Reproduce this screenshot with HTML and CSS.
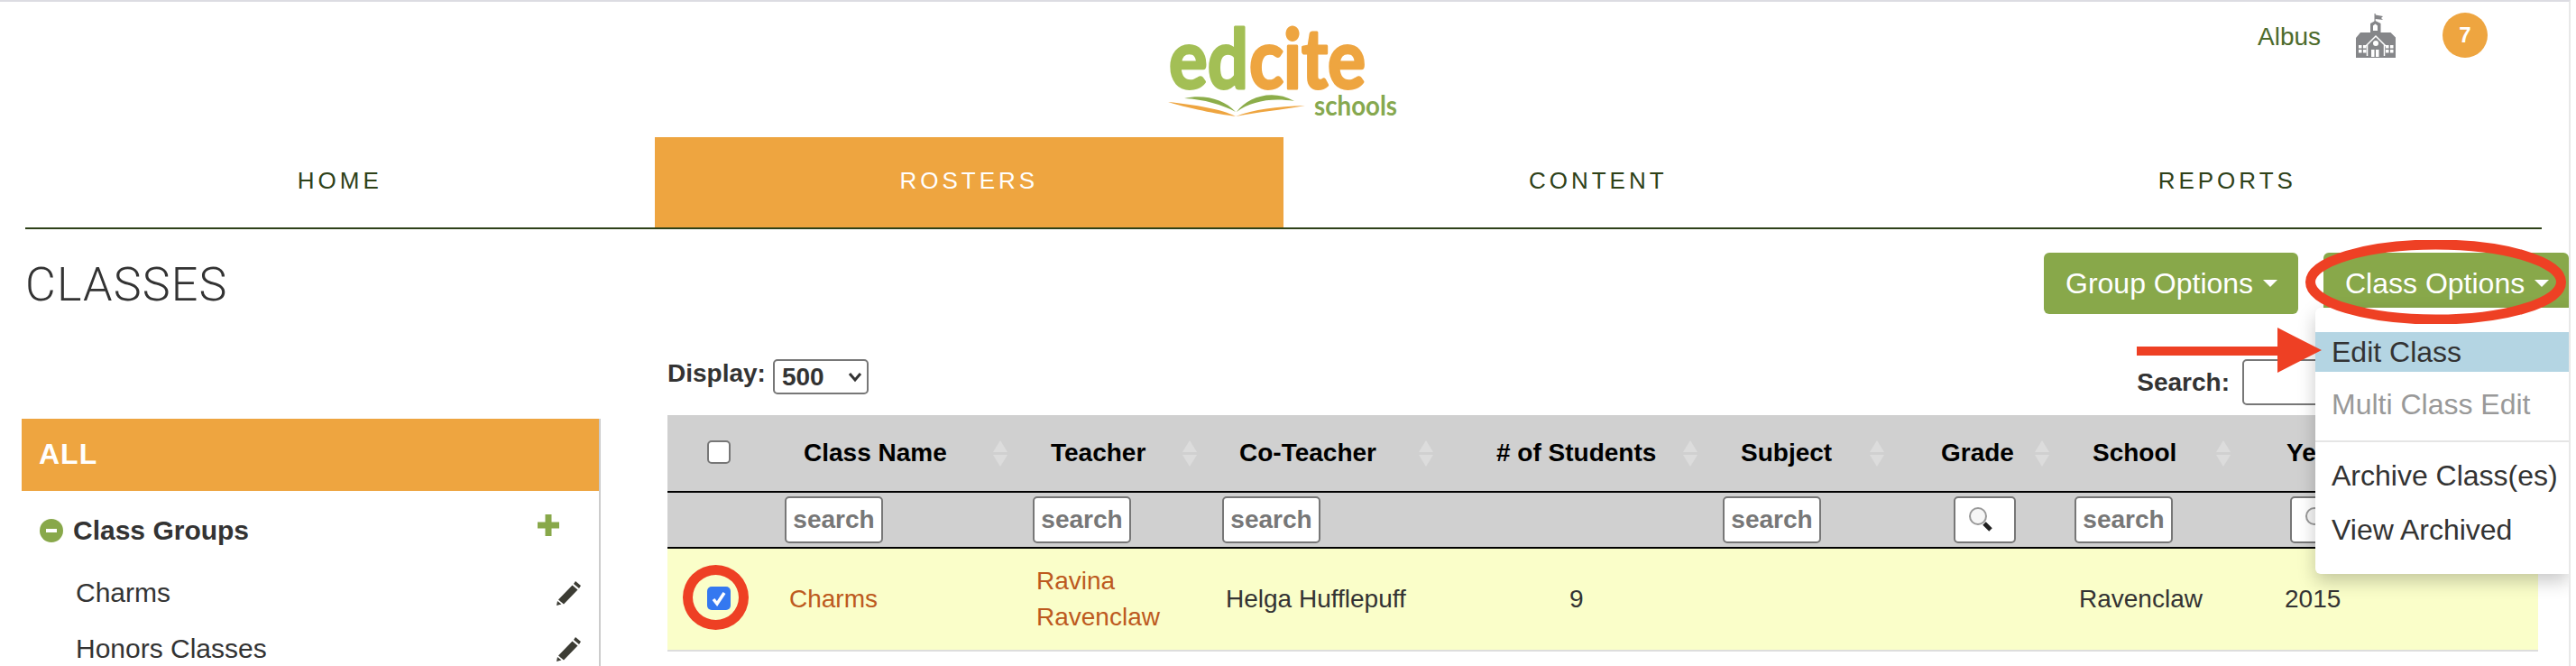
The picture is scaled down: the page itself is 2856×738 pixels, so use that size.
FILE: index.html
```html
<!DOCTYPE html>
<html lang="en">
<head>
<meta charset="utf-8">
<title>Classes</title>
<link rel="stylesheet" href="styles.css">
</head>
<body>
<div class="page">
  <header class="top">
    <svg class="logo" width="256" height="102" viewBox="0 0 256 102">
      <text class="logo-word logo-green" x="1" y="66" textLength="88" lengthAdjust="spacingAndGlyphs">ed</text>
      <text class="logo-word logo-orange" x="90" y="66" textLength="129" lengthAdjust="spacingAndGlyphs">cite</text>
      <text class="logo-schools" x="162" y="96" textLength="92" lengthAdjust="spacingAndGlyphs">schools</text>
      <path class="logo-orange-fill" d="M0 81C30 84 60 89 75 97C60 95 30 90 0 81Z"/>
      <path class="logo-orange-fill" d="M75 97C95 89 120 86 152 85C125 90 100 92 75 97Z"/>
      <path class="logo-green-fill" d="M18 77C40 72 62 78 75 92C60 84 40 78 18 77Z"/>
      <path class="logo-green-fill" d="M76 92C88 76 115 66 140 80C115 76 92 80 76 92Z"/>
    </svg>
    <div class="user">
      <span class="user-name">Albus</span>
      <svg class="school-icon" width="44" height="49" viewBox="0 0 44 49">
        <path d="M20.500 0h1.200v1.500l8.300 1.500-2 2 2 2-8.300-1v3h-1.200z"/>
        <path d="M16 11l5.500-3 6 3v10h11l6 6v22H0V27l5-6h11z"/>
        <path class="school-line" d="M11 36L22 25l11 11"/>
        <path class="school-line" d="M12.500 47V35M31.500 47V35"/>
        <path class="school-cut" d="M19 19v-5.500l2.500-2 2.500 2V19z"/>
        <circle class="school-cut" cx="22" cy="33" r="3"/>
        <rect class="school-cut" x="17" y="40" width="3.500" height="8"/>
        <rect class="school-cut" x="22" y="40" width="3.500" height="8"/>
        <rect class="school-cut" x="3" y="35" width="3.500" height="3.500"/><rect class="school-cut" x="8" y="35" width="3.500" height="3.500"/>
        <rect class="school-cut" x="3" y="40" width="3.500" height="3.500"/><rect class="school-cut" x="8" y="40" width="3.500" height="3.500"/>
        <rect class="school-cut" x="33" y="35" width="3.500" height="3.500"/><rect class="school-cut" x="38" y="35" width="3.500" height="3.500"/>
        <rect class="school-cut" x="33" y="40" width="3.500" height="3.500"/><rect class="school-cut" x="38" y="40" width="3.500" height="3.500"/>
      </svg>
      <span class="badge">7</span>
    </div>
  </header>

  <nav class="nav">
    <a class="nav-tab">HOME</a>
    <a class="nav-tab nav-active">ROSTERS</a>
    <a class="nav-tab">CONTENT</a>
    <a class="nav-tab">REPORTS</a>
  </nav>

  <div class="title-row">
    <h1 class="title">CLASSES</h1>
    <div class="actions">
      <button class="btn btn-group">Group Options<span class="caret"></span></button>
      <div class="btn-wrap">
        <button class="btn btn-class">Class Options<span class="caret"></span></button>
        <ul class="menu">
          <li class="menu-item menu-hover">Edit Class</li>
          <li class="menu-item menu-disabled">Multi Class Edit</li>
          <li class="menu-divider"></li>
          <li class="menu-item">Archive Class(es)</li>
          <li class="menu-item">View Archived</li>
        </ul>
      </div>
    </div>
  </div>

  <div class="content">
    <aside class="side">
      <div class="side-all">ALL</div>
      <div class="side-group">
        <span class="minus"></span>
        <span class="side-group-name">Class Groups</span>
        <svg class="plus" width="24" height="24" viewBox="0 0 24 24"><path d="M8.500 0h7v8.500H24v7h-8.500V24h-7v-8.500H0v-7h8.500z"/></svg>
      </div>
      <div class="side-item">Charms
        <svg class="pencil" width="27" height="27" viewBox="0 0 27 27"><path d="M21 0l6 5-2 3-6-5zM17.500 4.500l6 5L8 25.500l-6-5zM1 22l4.500 3.500L0 27z"/></svg>
      </div>
      <div class="side-item">Honors Classes
        <svg class="pencil" width="27" height="27" viewBox="0 0 27 27"><path d="M21 0l6 5-2 3-6-5zM17.500 4.500l6 5L8 25.500l-6-5zM1 22l4.500 3.500L0 27z"/></svg>
      </div>
    </aside>

    <section class="main">
      <div class="toolbar">
        <label class="field">Display:
          <span class="select">500
            <svg class="chev" width="16" height="12" viewBox="0 0 16 12"><path d="M2 2l6 7 6-7"/></svg>
          </span>
        </label>
        <label class="field field-search">Search:<span class="search-box"></span></label>
      </div>
      <table class="grid">
        <colgroup>
          <col class="c-check"><col class="c-name"><col class="c-teacher"><col class="c-co"><col class="c-students"><col class="c-subject"><col class="c-grade"><col class="c-school"><col class="c-year">
        </colgroup>
        <thead>
          <tr class="head-row">
            <th class="th-check"><span class="box"></span></th>
            <th>Class Name<span class="sort"></span></th>
            <th>Teacher<span class="sort"></span></th>
            <th>Co-Teacher<span class="sort"></span></th>
            <th># of Students<span class="sort"></span></th>
            <th>Subject<span class="sort"></span></th>
            <th>Grade<span class="sort"></span></th>
            <th>School<span class="sort"></span></th>
            <th>Year</th>
          </tr>
          <tr class="filter-row">
            <td></td>
            <td><span class="filter">search</span></td>
            <td><span class="filter">search</span></td>
            <td><span class="filter">search</span></td>
            <td></td>
            <td><span class="filter">search</span></td>
            <td><span class="filter filter-icon"><svg class="glass" width="30" height="30" viewBox="0 0 30 30"><path class="glass-handle" d="M18 19l7 7"/><circle class="glass-lens" cx="11" cy="11" r="9"/></svg></span></td>
            <td><span class="filter">search</span></td>
            <td><span class="filter filter-icon"><svg class="glass" width="30" height="30" viewBox="0 0 30 30"><path class="glass-handle" d="M18 19l7 7"/><circle class="glass-lens" cx="11" cy="11" r="9"/></svg></span></td>
          </tr>
        </thead>
        <tbody>
          <tr class="body-row">
            <td class="td-check"><span class="box box-on"><svg width="18" height="18" viewBox="0 0 18 18"><path d="M3 10l4 5 8-12"/></svg></span></td>
            <td><a class="link">Charms</a></td>
            <td><a class="link">Ravina<br>Ravenclaw</a></td>
            <td>Helga Hufflepuff</td>
            <td>9</td>
            <td></td>
            <td></td>
            <td>Ravenclaw</td>
            <td>2015</td>
          </tr>
        </tbody>
      </table>
    </section>
  </div>

  <svg class="mark mark-ellipse" width="289" height="93" viewBox="0 0 289 93"><ellipse cx="144.500" cy="46.500" rx="139" ry="41.500"/></svg>
  <svg class="mark mark-arrow" width="205" height="50" viewBox="0 0 205 50"><path d="M0 21h156V0l49 25-49 25V31H0z"/></svg>
  <span class="mark mark-ring"></span>
</div>
</body>
</html>
```

FILE: styles.css
```css
* { box-sizing: border-box; }
html, body { margin: 0; height: 738px; overflow: hidden; background: #fff; }
body { font-family: "Liberation Sans", Arial, sans-serif; color: #333; font-size: 28px; }

.page {
  position: relative;
  width: 2850px;
  height: 738px;
  overflow: hidden;
  border-top: 2px solid #dcdce2;
  border-right: 2px solid #e8e8e8;
}

/* header */
.top { position: relative; height: 150px; }
.logo { position: absolute; left: 1295px; top: 30px; overflow: visible; }
.logo-word { font-family: Lato, sans-serif; font-weight: 700; font-size: 92px; stroke-width: 3px; stroke-linejoin: round; }
.logo-green { fill: #a3bf55; stroke: #a3bf55; }
.logo-orange { fill: #eea540; stroke: #eea540; }
.logo-schools { font-family: Lato, sans-serif; font-weight: 700; font-size: 30px; fill: #86a84f; }
.logo-orange-fill { fill: #eea540; }
.logo-green-fill { fill: #8cad4a; }
.user { position: absolute; left: 2503px; top: 12px; display: flex; align-items: center; }
.user-name { color: #4d6b2c; font-size: 28px; margin-top: 4px; }
.school-icon { margin-left: 39px; fill: #858689; }
.school-line { fill: none; stroke: #fff; stroke-width: 1.500; }
.school-cut { fill: #fff; }
.badge {
  width: 50px; height: 50px; margin-left: 52px; border-radius: 50%;
  background: #eea540; color: #fff; font-weight: 700; font-size: 24px;
  display: flex; align-items: center; justify-content: center;
}

/* nav */
.nav { display: flex; margin: 0 30px 0 28px; border-bottom: 2px solid #2e4118; height: 102px; }
.nav-tab {
  flex: 1; display: flex; align-items: center; justify-content: center;
  padding-bottom: 3px; color: #2e4118; font-size: 26px; letter-spacing: 4px;
}
.nav-active { background: #eea540; color: #fff; }

/* title row */
.title-row { display: flex; justify-content: space-between; padding: 26px 0 0 28px; height: 110px; position: relative; z-index: 2; }
.title { margin: 7px 0 0; font-family: Roboto, sans-serif; font-weight: 300; font-size: 52px; line-height: 58px; color: #333; letter-spacing: 1.2px; }
.actions { display: flex; align-items: flex-start; gap: 28px; }
.btn-wrap { position: relative; }
.btn {
  display: flex; align-items: center; height: 68px; padding: 0 0 0 24px;
  border: 0; border-radius: 6px; background: #88a84a; color: #fff;
  font-family: inherit; font-size: 32px; white-space: nowrap;
}
.btn-group { width: 282px; }
.btn-class { width: 272px; }
.caret { margin-left: 11px; border-top: 8px solid #fff; border-left: 8px solid transparent; border-right: 8px solid transparent; }
.menu {
  position: absolute; top: 61px; left: -9px; right: 0; height: 295px; margin: 0; padding: 27px 0 0;
  list-style: none; background: #fff; border-radius: 6px 0 0 6px;
  box-shadow: 0 8px 20px rgba(0, 0, 0, .22);
}
.menu-item { height: 44px; padding-left: 18px; font-size: 32px; line-height: 44px; color: #333; }
.menu-hover { background: #b4d5e3; }
.menu-disabled { margin-top: 14px; color: #999; }
.menu-divider { height: 2px; margin: 18px 0 15px; background: #e5e5e5; }
.menu-divider + .menu-item + .menu-item { margin-top: 16px; }

/* content */
.content { display: flex; align-items: flex-start; }
.side { width: 642px; height: 274px; margin: 100px 0 0 24px; border-right: 2px solid #ccc; }
.side-all { height: 80px; padding: 0 0 0 19px; background: #eea540; color: #fff; font-size: 32px; font-weight: 700; letter-spacing: 1px; line-height: 78px; }
.side-group { display: flex; align-items: center; height: 30px; margin: 29px 44px 0 20px; }
.minus { position: relative; width: 26px; height: 26px; border-radius: 50%; background: #88a84a; }
.minus::after { content: ""; position: absolute; left: 7px; top: 11px; width: 12px; height: 4px; background: #fff; }
.side-group-name { margin-left: 11px; font-size: 30px; font-weight: 700; }
.plus { margin-left: auto; margin-top: -12px; fill: #88a84a; }
.side-item { display: flex; align-items: center; justify-content: space-between; height: 62px; padding: 0 20px 0 60px; font-size: 30px; }
.side-group + .side-item { margin-top: 23px; }
.pencil { fill: #3c3c34; }

.main { width: 2074px; margin-left: 74px; }
.toolbar { display: flex; justify-content: space-between; height: 96px; padding-top: 34px; }
.field { display: flex; font-weight: 700; color: #333; }
.select {
  display: flex; align-items: center; justify-content: space-between;
  width: 106px; height: 39px; margin-left: 8px; padding: 0 5px 0 8px;
  border: 2px solid #777; border-radius: 5px; background: #fff; font-weight: 700;
}
.chev { fill: none; stroke: #333; stroke-width: 3; }
.field-search { align-items: center; height: 51px; }
.search-box { width: 328px; height: 51px; margin-left: 14px; border: 2px solid #777; border-radius: 5px; background: #fff; }

/* table */
.grid { width: 2074px; table-layout: fixed; border-collapse: separate; border-spacing: 0; }
.c-check { width: 120px; }
.c-name { width: 275px; }
.c-teacher { width: 210px; }
.c-co { width: 262px; }
.c-students { width: 293px; }
.c-subject { width: 207px; }
.c-grade { width: 183px; }
.c-school { width: 201px; }
.c-year { width: 323px; }

.head-row th {
  position: relative; height: 86px; padding: 0; background: #d0d0d0; color: #000;
  font-size: 28px; font-weight: 700; text-align: left; white-space: nowrap;
  border-bottom: 2px solid #000;
}
.head-row th:nth-child(2) { padding-left: 31px; }
.head-row th:nth-child(3) { padding-left: 30px; }
.head-row th:nth-child(4) { padding-left: 29px; }
.head-row th:nth-child(5) { padding-left: 52px; }
.head-row th:nth-child(6) { padding-left: 30px; }
.head-row th:nth-child(7) { padding-left: 45px; }
.head-row th:nth-child(8) { padding-left: 30px; }
.head-row th:nth-child(9) { padding-left: 44px; }
.box {
  display: block; width: 26px; height: 26px; margin: 0 0 3px 44px;
  background: #fff; border: 2px solid #777; border-radius: 5px;
}
.box-on { display: flex; align-items: center; justify-content: center; margin-bottom: 2px; background: #3478f0; border: 0; }
.box-on svg { fill: none; stroke: #fff; stroke-width: 3.500; }
.sort { position: absolute; right: 18px; top: 28px; width: 16px; height: 29px; }
.sort::before, .sort::after { content: ""; position: absolute; left: 0; border-left: 8px solid transparent; border-right: 8px solid transparent; }
.sort::before { top: 0; border-bottom: 13px solid #dcdcdc; }
.sort::after { bottom: 0; border-top: 13px solid #dcdcdc; }

.filter-row td { height: 62px; padding: 0 0 0 10px; background: #d0d0d0; border-bottom: 2px solid #000; vertical-align: middle; }
.filter-row td:nth-child(7) { padding-left: 59px; }
.filter-row td:nth-child(9) { padding-left: 48px; }
.filter {
  display: flex; align-items: center; justify-content: center;
  width: 109px; height: 52px; background: #fff; border: 2px solid #777; border-radius: 5px;
  color: #777; font-size: 28px; font-weight: 700;
}
.filter-icon { width: 69px; }
.glass { margin-left: -7px; }
.glass-handle { fill: none; stroke: #222; stroke-width: 5; }
.glass-lens { fill: #f6f6f6; stroke: #999; stroke-width: 2; }

.body-row td { height: 114px; padding: 0; background: #fafec9; border-bottom: 2px solid #ddd; color: #333; vertical-align: middle; line-height: 40px; }
.body-row td:nth-child(2) { padding-left: 15px; }
.body-row td:nth-child(3) { padding-left: 14px; }
.body-row td:nth-child(4) { padding-left: 14px; }
.body-row td:nth-child(5) { padding-left: 133px; }
.body-row td:nth-child(8) { padding-left: 15px; }
.body-row td:nth-child(9) { padding-left: 42px; }
.link { color: #bd5a1e; }

/* annotations drawn over the screenshot */
.mark { position: absolute; z-index: 3; }
.mark-ellipse { left: 2556px; top: 264px; fill: none; stroke: #ee4024; stroke-width: 11; }
.mark-arrow { left: 2369px; top: 361px; fill: #ee4024; }
.mark-ring { left: 757px; top: 624px; width: 73px; height: 72px; border: 11px solid #ee4024; border-radius: 50%; }
```
